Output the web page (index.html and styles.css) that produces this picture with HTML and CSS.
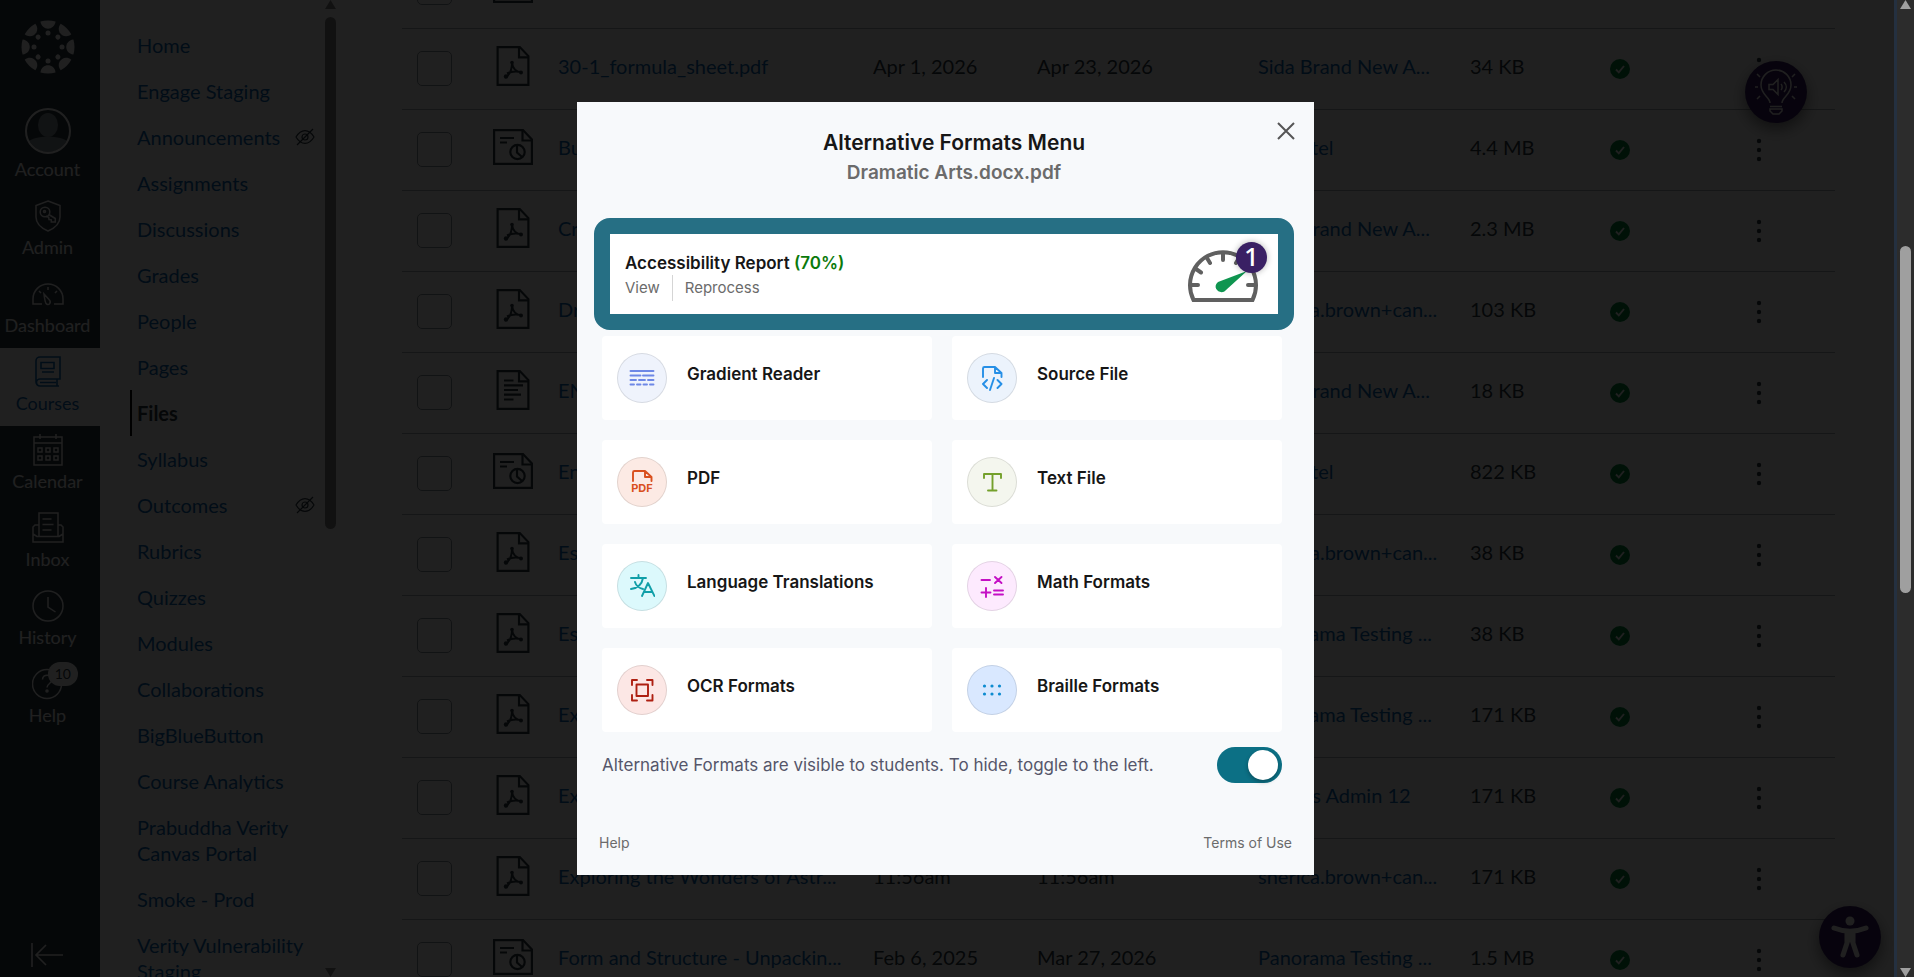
FILE: index.html
```html
<!DOCTYPE html>
<html lang="en">
<head>
    <meta charset="UTF-8">
    <meta name="viewport" content="width=device-width, initial-scale=1.0">
    <title>Files</title>
    <link rel="stylesheet" href="styles.css">
</head>
<body>
    <!-- shared icons -->
    <svg class="sprite" aria-hidden="true">
        <symbol id="pdf" viewBox="0 0 40 40">
            <g fill="none" stroke="currentColor" stroke-width="2.2">
                <path d="M4.6 1.1h22.2l8.6 9v28.8H4.6z"/>
                <path d="M26 1v10.400h9"/>
                <path d="M19 16c0 7-2 13-7 15.500M19 16c.5 7 4 10 10 10.500M14 27.500c4-2 8-2.500 14-1.500" stroke-width="2"/>
            </g>
            <g fill="currentColor"><circle cx="19" cy="16.500" r="1.800"/><circle cx="28" cy="26.500" r="2"/><circle cx="13" cy="30.500" r="2.200"/></g>
        </symbol>
        <symbol id="media" viewBox="0 0 40 40">
            <g fill="none" stroke="currentColor" stroke-width="2.2">
                <path d="M1.100 3.100H30L38.900 12.500V36.900H1.100z"/>
                <path d="M29.500 3v10.500H39M7 11h14M7 15.500h7"/>
                <circle cx="24.500" cy="25" r="7.200"/>
                <path d="M24 17.500v8l5 4.500"/>
            </g>
        </symbol>
        <symbol id="doc" viewBox="0 0 40 40">
            <g fill="none" stroke="currentColor" stroke-width="2.2">
                <path d="M4.6 1.1h22.2l8.6 9v28.8H4.6z"/>
                <path d="M26 1v10.400h9M11 10.500h9.500M11 15.300h19M11 20h14M11 24.700h17M11 29.500h9.500"/>
            </g>
        </symbol>
        <symbol id="check" viewBox="0 0 20 20">
            <circle cx="10" cy="10" r="10" fill="#03893d"/>
            <path d="M6 10.500l2.800 2.800L14 7" fill="none" stroke="#fff" stroke-width="1.900"/>
        </symbol>
        <symbol id="dots" viewBox="0 0 24 24">
            <g fill="#2d3b45"><circle cx="12" cy="3" r="2.200"/><circle cx="12" cy="12" r="2.200"/><circle cx="12" cy="21" r="2.200"/></g>
        </symbol>
        <symbol id="hidden" viewBox="0 0 20 18">
            <g fill="none" stroke="#2d3b45" stroke-width="1.200">
                <path d="M1 9c5-8.500 13-8.500 18 0-5 8.500-13 8.500-18 0z"/>
                <circle cx="10" cy="9" r="3"/><path d="M2 17L18 1"/>
            </g>
        </symbol>
    </svg>

    <div class="app">
        <nav class="global-nav">
            <a class="logo" href="#" aria-label="Canvas home">
                <svg width="54" height="54" viewBox="-27 -27 54 54" fill="#fff">
                    <defs>
                        <g id="petal"><path d="M-7.500-25.400a27 27 0 0 1 15 0c-1 9.500-14 9.500-15 0z"/><circle cy="-14" r="2.500"/></g>
                    </defs>
                    <use href="#petal"/>
                    <use href="#petal" transform="rotate(45)"/>
                    <use href="#petal" transform="rotate(90)"/>
                    <use href="#petal" transform="rotate(135)"/>
                    <use href="#petal" transform="rotate(180)"/>
                    <use href="#petal" transform="rotate(225)"/>
                    <use href="#petal" transform="rotate(270)"/>
                    <use href="#petal" transform="rotate(315)"/>
                </svg>
            </a>
            <a class="nav-item account" href="#">
                <svg width="46" height="46" viewBox="0 0 46 46">
                    <clipPath id="face"><circle cx="23" cy="23" r="21"/></clipPath>
                    <g clip-path="url(#face)" fill="#8b969e"><ellipse cx="23" cy="17" rx="10" ry="12"/><path d="M3 46V34c6-7 34-7 40 0v12z"/></g>
                    <circle cx="23" cy="23" r="22" fill="none" stroke="#fff" stroke-width="2"/>
                </svg>
                Account
            </a>
            <a class="nav-item" href="#">
                <svg width="32" height="32" viewBox="0 0 32 32" fill="none" stroke="currentColor" stroke-width="1.500">
                    <path d="M16 1l12 4.500V17c0 7-5 11-12 14C9 28 4 24 4 17V5.500z"/>
                    <circle cx="13" cy="12" r="4.800"/><circle cx="12.500" cy="11.500" r="1"/>
                    <path d="M16.800 14.500l6.500 4v3.500h-4v-2.200l-2.300-.3-.3-2.300-2.700-1"/>
                </svg>
                Admin
            </a>
            <a class="nav-item" href="#">
                <svg width="32" height="32" viewBox="0 0 32 32" fill="none" stroke="currentColor" stroke-width="1.500">
                    <path d="M10 26H1v-5a15 15 0 0 1 30 0v5h-9"/>
                    <path d="M12 16l5 5.500c3 3-.5 7-3 4-1-2-1.500-5-2-9.500z"/>
                    <path d="M16 9v3M7 13l2 2M25 13l-2 2"/>
                </svg>
                Dashboard
            </a>
            <a class="nav-item active" href="#">
                <svg width="32" height="32" viewBox="0 0 32 32" fill="none" stroke="currentColor" stroke-width="1.600">
                    <path d="M27 30H8a4 4 0 0 1-4-4V5a4 4 0 0 1 4-4h20v22H8a3.500 3.500 0 0 0 0 7M25 23v7M8 26.500h16M9 6.500h13v6H9zM10 16h12"/>
                </svg>
                Courses
            </a>
            <a class="nav-item" href="#">
                <svg width="32" height="32" viewBox="0 0 32 32" fill="none" stroke="currentColor" stroke-width="1.500">
                    <path d="M2 3h28v28H2zM2 9h28M8 0v5M24 0v5M6 14h4v4H6zM14 14h4v4h-4zM22 14h4v4h-4zM6 22h4v4H6zM14 22h4v4h-4zM22 22h4v4h-4z"/>
                </svg>
                Calendar
            </a>
            <a class="nav-item" href="#">
                <svg width="32" height="32" viewBox="0 0 32 32" fill="none" stroke="currentColor" stroke-width="1.500">
                    <path d="M7 24V1h19v23M7 13H3l-2 2v15h30V15l-2-2h-3M1 22l4 2.500h22l4-2.500M10.500 7h9M10.500 12.500h11M10.500 18h9"/>
                </svg>
                Inbox
            </a>
            <a class="nav-item" href="#">
                <svg width="32" height="32" viewBox="0 0 32 32" fill="none" stroke="currentColor" stroke-width="1.500">
                    <circle cx="16" cy="16" r="15"/><path d="M16 7v10l7.500 5"/>
                </svg>
                History
            </a>
            <a class="nav-item" href="#">
                <svg width="32" height="32" viewBox="0 0 32 32" fill="none" stroke="currentColor" stroke-width="1.500">
                    <circle cx="15" cy="16" r="14.500"/><path d="M10.500 11.500c0-6 9.500-5.500 9.500 0 0 4-5 4-5 8"/><circle cx="15" cy="23" r="1"/>
                </svg>
                Help
                <span class="count">10</span>
            </a>
            <button class="collapse" type="button" aria-label="Minimize navigation">
                <svg width="32" height="24" viewBox="0 0 32 24" fill="none" stroke="currentColor" stroke-width="1.600"><path d="M1 0v24M32 12H6M15 2L5 12l10 10"/></svg>
            </button>
        </nav>

        <nav class="course-nav">
            <div class="course-links">
                <a href="#">Home</a>
                <a href="#">Engage Staging</a>
                <a href="#">Announcements <svg width="20" height="18"><use href="#hidden"/></svg></a>
                <a href="#">Assignments</a>
                <a href="#">Discussions</a>
                <a href="#">Grades</a>
                <a href="#">People</a>
                <a href="#">Pages</a>
                <a class="active" href="#">Files</a>
                <a href="#">Syllabus</a>
                <a href="#">Outcomes <svg width="20" height="18"><use href="#hidden"/></svg></a>
                <a href="#">Rubrics</a>
                <a href="#">Quizzes</a>
                <a href="#">Modules</a>
                <a href="#">Collaborations</a>
                <a href="#">BigBlueButton</a>
                <a href="#">Course Analytics</a>
                <a href="#">Prabuddha Verity Canvas Portal</a>
                <a href="#">Smoke - Prod</a>
                <a href="#">Verity Vulnerability Staging</a>
            </div>
            <div class="scroller">
                <span class="arrow up"></span>
                <span class="thumb"></span>
                <span class="arrow down"></span>
            </div>
        </nav>

        <main class="files">
            <table>
                <colgroup>
                    <col class="c-check"><col class="c-icon"><col class="c-name"><col class="c-date"><col class="c-modified"><col class="c-by"><col class="c-size"><col class="c-status"><col class="c-menu">
                </colgroup>
                <tbody id="rows"></tbody>
            </table>
        </main>
    </div>

    <button class="fab fab-bulb" type="button" aria-label="Listen">
        <svg width="48" height="48" viewBox="0 0 48 48" fill="none" stroke="#fff" stroke-width="1.500">
            <path d="M18 35c0-6-9-8-9-18a15 15 0 0 1 30 0c0 10-9 12-9 18M18 38.500h12M18 41v2l3 3h6l3-3v-2z"/>
            <path d="M17 16.500h4l5-5v15l-5-5h-4zM29 16c1.500 1.500 1.500 4.500 0 6M32 14c3 3 3 7 0 10M3 19h3M42 19h3M5 6l3 3M43 6l-3 3M5 31l3-3M43 31l-3-3"/>
        </svg>
    </button>
    <button class="fab fab-access" type="button" aria-label="Accessibility options">
        <svg width="40" height="44" viewBox="0 0 40 44" fill="#fff" stroke="#fff" stroke-linecap="round" stroke-linejoin="round">
            <circle cx="20" cy="6" r="4.500" stroke="none"/>
            <path d="M4 13c10 4 22 4 32 0M17 18v10l-4 12M23 18v10l4 12" fill="none" stroke-width="5"/><path d="M17 18h6v9h-6z"/>
        </svg>
    </button>

    <div class="backdrop">
        <section class="modal" role="dialog" aria-modal="true" aria-labelledby="modal-title">
            <button class="close" type="button" aria-label="Close">
                <svg width="18" height="18" viewBox="0 0 18 18" fill="none" stroke="#555" stroke-width="2"><path d="M1 1l16 16M17 1L1 17"/></svg>
            </button>
            <header>
                <h1 id="modal-title">Alternative Formats Menu</h1>
                <h2>Dramatic Arts.docx.pdf</h2>
            </header>

            <div class="report">
                <div>
                    <h3>Accessibility Report <span>(70%)</span></h3>
                    <div class="report-links">
                        <a href="#">View</a>
                        <a href="#">Reprocess</a>
                    </div>
                </div>
                <div class="gauge">
                    <svg width="70" height="52" viewBox="0 0 70 52" fill="none" stroke="#606060" stroke-width="4">
                        <path d="M5.500 50A33 33 0 1 1 64.500 50z"/>
                        <path d="M3 35h7M60 35h7M8 19l5 3.500M19 8l3 5M35 3v7M51 8l-3 5" stroke-linecap="round"/>
                        <path d="M30 32L59 21 38 40c-5 6-15-2-8-8z" fill="#0f9550" stroke="none"/>
                    </svg>
                    <span class="badge">1</span>
                </div>
            </div>

            <div class="formats">
                <button class="card" type="button">
                    <span class="icon gradient"><svg width="26" height="26" viewBox="0 0 26 26"><path d="M1.500 6h23M1.500 10.500h10M14 10.500h10.500M1.500 15h5.500M10 15h6M19 15h5.500M1.500 19.500h3.500M8 19.500h3.500M14.500 19.500H18M21 19.500h3.500"/></svg></span>
                    <span>Gradient Reader</span>
                </button>
                <button class="card" type="button">
                    <span class="icon source"><svg width="26" height="26" viewBox="0 0 26 26"><path d="M4 12V3.500Q4 2 5.500 2H16l6.500 6v4M16 2v6h6.500M8 15l-4 4 4 4M18.500 15l4 4-4 4M15 13l-4 12"/></svg></span>
                    <span>Source File</span>
                </button>
                <button class="card" type="button">
                    <span class="icon pdf"><svg width="26" height="26" viewBox="0 0 26 26"><path d="M4 12V3.500Q4 2 5.500 2H16l6.500 6v4M16 2v6h6.500"/><text x="13" y="23" text-anchor="middle">PDF</text></svg></span>
                    <span>PDF</span>
                </button>
                <button class="card" type="button">
                    <span class="icon text"><svg width="26" height="26" viewBox="0 0 26 26"><path d="M5 9V5h17v4M13.500 5v16.500M9 21.500h8.500"/></svg></span>
                    <span>Text File</span>
                </button>
                <button class="card" type="button">
                    <span class="icon language"><svg width="26" height="26" viewBox="0 0 26 26"><path d="M2 5h15M9.500 2v3M14 5c-1 6-5 10-12 11M6 9c1 4 5 6.500 8 7M13 23l6-13 6.500 13M15 19h8.500"/></svg></span>
                    <span>Language Translations</span>
                </button>
                <button class="card" type="button">
                    <span class="icon math"><svg width="26" height="26" viewBox="0 0 26 26"><path d="M2.500 7h8.500M16 4l6.500 6M22.500 4L16 10M2.500 19.500h9M7 15v9M15 17.500h9M15 21.500h9"/></svg></span>
                    <span>Math Formats</span>
                </button>
                <button class="card" type="button">
                    <span class="icon ocr"><svg width="26" height="26" viewBox="0 0 26 26"><path d="M3 8V3h5M18 3h5.500v5M3 18v5.500h5M18 23.500h5.500V18M7.500 7.500h11.500v11.500H7.500z"/></svg></span>
                    <span>OCR Formats</span>
                </button>
                <button class="card" type="button">
                    <span class="icon braille"><svg width="26" height="26" viewBox="0 0 26 26"><g><circle cx="5.500" cy="9" r="1.600"/><circle cx="13" cy="9" r="1.600"/><circle cx="20.500" cy="9" r="1.600"/><circle cx="5.500" cy="17" r="1.600"/><circle cx="13" cy="17" r="1.600"/><circle cx="20.500" cy="17" r="1.600"/></g></svg></span>
                    <span>Braille Formats</span>
                </button>
            </div>

            <div class="visibility">
                <label for="visible">Alternative Formats are visible to students. To hide, toggle to the left.</label>
                <input id="visible" type="checkbox" role="switch" checked>
            </div>

            <footer>
                <a href="#">Help</a>
                <a href="#">Terms of Use</a>
            </footer>
        </section>
    </div>

    <div class="page-scroller">
        <span class="arrow up"></span>
        <span class="thumb"></span>
        <span class="arrow down"></span>
    </div>

    <script>
        const files = [
            ['media', '', '', '', '', ''],
            ['pdf', '30-1_formula_sheet.pdf', 'Apr 1, 2026', 'Apr 23, 2026', 'Sida Brand New A...', '34 KB'],
            ['media', 'Bu', '', '', 'Ian Patel', '4.4 MB'],
            ['pdf', 'Cr', '', '', 'Sida Brand New A...', '2.3 MB'],
            ['pdf', 'Dr', '', '', 'sherica.brown+can...', '103 KB'],
            ['doc', 'EN', '', '', 'Sida Brand New A...', '18 KB'],
            ['media', 'En', '', '', 'Ian Patel', '822 KB'],
            ['pdf', 'Es', '', '', 'sherica.brown+can...', '38 KB'],
            ['pdf', 'Es', '', '', 'Panorama Testing ...', '38 KB'],
            ['pdf', 'Ex', '', '', 'Panorama Testing ...', '171 KB'],
            ['pdf', 'Ex', '', '', 'Canvas Admin 12', '171 KB'],
            ['pdf', 'Exploring the Wonders of Astr...', '11:56am', '11:56am', 'sherica.brown+can...', '171 KB'],
            ['media', 'Form and Structure - Unpackin...', 'Feb 6, 2025', 'Mar 27, 2026', 'Panorama Testing ...', '1.5 MB']
        ];

        document.getElementById('rows').innerHTML = files.map(([icon, name, created, modified, by, size]) => `
            <tr>
                <td><input type="checkbox" aria-label="Select ${name}"></td>
                <td><svg width="40" height="40"><use href="#${icon}"/></svg></td>
                <td><a href="#">${name}</a></td>
                <td>${created}</td>
                <td>${modified}</td>
                <td><a href="#">${by}</a></td>
                <td>${size}</td>
                <td class="control"><svg width="20" height="20"><use href="#check"/></svg></td>
                <td class="control"><button type="button" aria-label="Actions"><svg width="24" height="24"><use href="#dots"/></svg></button></td>
            </tr>`).join('');
    </script>
</body>
</html>
```
FILE: styles.css
```css
* {
    box-sizing: border-box;
}

body {
    margin: 0;
    height: 100vh;
    overflow: hidden;
    background: #fff;
    color: #2d3b45;
    font-family: Lato, sans-serif;
    font-size: 20px;
}

a {
    color: #0e68b3;
    text-decoration: none;
}

button {
    font: inherit;
    border: none;
    background: none;
    padding: 0;
    cursor: pointer;
}

svg {
    display: block;
    flex: none;
}

.sprite {
    position: absolute;
    width: 0;
    height: 0;
}

.app {
    display: flex;
    height: 100vh;
}

/* Global navigation */
.global-nav {
    width: 100px;
    flex: none;
    display: flex;
    flex-direction: column;
    background: #2d3b45;
    color: #fff;
}

.logo {
    display: flex;
    justify-content: center;
    padding: 20px 5px 20px 0;
    margin-bottom: 6px;
}

.nav-item {
    position: relative;
    height: 78px;
    display: flex;
    flex-direction: column;
    align-items: center;
    gap: 3px;
    padding: 8px 5px 0 0;
    color: #fff;
    font-size: 18px;
    line-height: 24px;
}

.nav-item.account {
    height: 92px;
}

.nav-item.active {
    background: #fff;
    color: #0e68b3;
}

.count {
    position: absolute;
    top: 2px;
    right: 22px;
    padding: 0 7px;
    border-radius: 12px;
    background: #fff;
    color: #2d3b45;
    font-size: 14px;
}

.collapse {
    margin-top: auto;
    padding: 0 31px 10px;
    color: #fff;
}

/* Course navigation */
.course-nav {
    width: 236px;
    flex: none;
    display: flex;
    padding-left: 30px;
    overflow: hidden;
}

.course-links {
    flex: 1;
    padding-top: 22px;
}

.course-links a {
    display: flex;
    justify-content: space-between;
    align-items: center;
    padding: 10px 10px 10px 5px;
    border-left: 2px solid transparent;
    line-height: 26px;
}

.course-links a.active {
    border-color: #000;
    color: #2d3b45;
    font-weight: bold;
}

.scroller {
    width: 11px;
    display: flex;
    flex-direction: column;
}

.arrow {
    width: 11px;
    height: 9px;
    background: #8b8b8b;
}

.arrow.up {
    clip-path: polygon(50% 0, 100% 100%, 0 100%);
}

.arrow.down {
    margin-top: auto;
    clip-path: polygon(0 0, 100% 0, 50% 100%);
}

.scroller .thumb {
    height: 52.4%;
    margin-top: 8px;
    border-radius: 6px;
    background: #8b8b8b;
}

/* File list */
.files {
    flex: 1;
    overflow: hidden;
    padding: 0 79px 0 66px;
}

.files table {
    width: 100%;
    margin-top: -53px;
    table-layout: fixed;
    border-collapse: collapse;
}

.files td {
    height: 81px;
    padding: 0 0 5px;
    border-bottom: 1px solid #a5adb3;
    white-space: nowrap;
    overflow: hidden;
}

.files td.control {
    padding: 0;
}

.files button {
    display: block;
}

.files input {
    display: block;
    appearance: none;
    width: 35px;
    height: 35px;
    margin: 5px 15px 0;
    border: 1px solid #8b969e;
    border-radius: 5px;
}

.c-check { width: 91px; }
.c-icon { width: 65px; }
.c-name { width: 315px; }
.c-date { width: 164px; }
.c-modified { width: 221px; }
.c-by { width: 212px; }
.c-size { width: 140px; }
.c-status { width: 137px; }

/* Floating buttons */
.fab {
    position: absolute;
    width: 62px;
    height: 62px;
    display: flex;
    justify-content: center;
    align-items: center;
    border-radius: 50%;
    background: #3a1f66;
    box-shadow: 0 6px 16px rgba(0, 0, 0, 0.5);
}

.fab-bulb {
    top: 61px;
    right: 107px;
}

.fab-access {
    right: 33px;
    bottom: 9px;
}

/* Modal */
.backdrop {
    position: absolute;
    inset: 0;
    display: flex;
    justify-content: center;
    align-items: center;
    padding-right: 23px;
    background: rgba(0, 0, 0, 0.875);
}

.modal {
    position: relative;
    width: 737px;
    padding: 26px 20px 19px 17px;
    background: #f7f9fb;
    color: #161616;
    font-family: Inter, sans-serif;
}

.modal h1,
.modal h2,
.modal h3 {
    margin: 0;
    font-weight: 600;
}

.close {
    position: absolute;
    top: 20px;
    right: 19px;
}

header {
    margin-bottom: 30px;
    padding-left: 20px;
    text-align: center;
}

.modal h1 {
    font-size: 21px;
    line-height: 30px;
}

.modal h2 {
    color: #6b6b6b;
    font-size: 19px;
    line-height: 30px;
}

.report {
    display: flex;
    justify-content: space-between;
    align-items: center;
    height: 112px;
    padding: 4px 20px 0 15px;
    border: 16px solid #266f84;
    border-radius: 16px;
    background: #fff;
}

.modal h3 {
    font-size: 17px;
    line-height: 24px;
}

.modal h3 span {
    color: #0b7a0b;
}

.report-links {
    display: flex;
    font-size: 15px;
    line-height: 26px;
}

.report-links a {
    color: #6b6b6b;
}

.report-links a + a {
    margin-left: 12px;
    padding-left: 12px;
    border-left: 1px solid #d5d5d5;
}

.gauge {
    position: relative;
}

.badge {
    position: absolute;
    top: -8px;
    right: -9px;
    width: 31px;
    height: 31px;
    border-radius: 50%;
    background: #3a2064;
    box-shadow: 0 0 6px rgba(0, 0, 0, 0.3);
    color: #fff;
    font-family: "Noto Sans", sans-serif;
    font-size: 26px;
    font-weight: 500;
    line-height: 28px;
    text-align: center;
}

.formats {
    display: grid;
    grid-template-columns: 1fr 1fr;
    gap: 20px;
    margin: 6px 12px 15px 8px;
}

.card {
    display: flex;
    align-items: center;
    gap: 20px;
    height: 84px;
    padding: 0 15px;
    border-radius: 4px;
    background: #fff;
    color: #161616;
    font-size: 17px;
    font-weight: 600;
}

.card > span:last-child {
    padding-bottom: 8px;
}

.icon {
    display: flex;
    justify-content: center;
    align-items: center;
    width: 50px;
    height: 50px;
    border: 1px solid rgba(0, 0, 0, 0.1);
    border-radius: 50%;
}

.icon path {
    fill: none;
    stroke: currentColor;
    stroke-width: 1.9;
    stroke-linecap: round;
    stroke-linejoin: round;
}

.icon text {
    fill: currentColor;
    font-size: 11px;
    font-weight: bold;
}

.icon circle {
    fill: currentColor;
}

.gradient { background: #eff3fc; color: #6e88e6; }
.source { background: #ecf3fc; color: #268fe6; }
.pdf { background: #fceae4; color: #d9501e; }
.text { background: #f4f6ee; color: #74a02b; }
.language { background: #dcf9fc; color: #109fa8; }
.math { background: #fdeafe; color: #c40fc4; }
.ocr { background: #fce7e5; color: #ae2012; }
.braille { background: #d9e8ff; color: #0d8bd0; }

.visibility {
    display: flex;
    justify-content: space-between;
    align-items: center;
    margin: 0 12px 0 8px;
    color: #55566a;
    font-size: 17px;
}

.visibility input {
    appearance: none;
    display: flex;
    justify-content: flex-end;
    width: 65px;
    height: 36px;
    margin: 0;
    padding: 3px 4px;
    border-radius: 18px;
    background: #0c7085;
}

.visibility input::before {
    content: "";
    width: 30px;
    height: 30px;
    border-radius: 50%;
    background: #fff;
    box-shadow: 0 2px 4px rgba(0, 0, 0, 0.3);
}

footer {
    display: flex;
    justify-content: space-between;
    margin-top: 47px;
    padding: 0 2px 0 5px;
    font-size: 14px;
    line-height: 26px;
}

footer a {
    color: #6b6b6b;
}

/* Page scrollbar */
.page-scroller {
    position: absolute;
    top: 0;
    right: 0;
    bottom: 0;
    width: 20px;
    display: flex;
    flex-direction: column;
    align-items: center;
    border-left: 3px solid #243040;
    background: #2c2c2c;
}

.page-scroller .arrow,
.page-scroller .thumb {
    background: #9f9f9f;
}

.page-scroller .thumb {
    width: 11px;
    height: 35.5%;
    margin-top: 237px;
    border-radius: 6px;
}
```
